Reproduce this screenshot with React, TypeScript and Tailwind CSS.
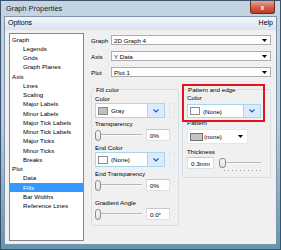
import React from 'react';

const tree: [string, number][] = [
  ['Graph', 0],
  ['Legends', 1],
  ['Grids', 1],
  ['Graph Planes', 1],
  ['Axis', 0],
  ['Lines', 1],
  ['Scaling', 1],
  ['Major Labels', 1],
  ['Minor Labels', 1],
  ['Major Tick Labels', 1],
  ['Minor Tick Labels', 1],
  ['Major Ticks', 1],
  ['Minor Ticks', 1],
  ['Breaks', 1],
  ['Plot', 0],
  ['Data', 1],
  ['Fills', 1],
  ['Bar Widths', 1],
  ['Reference Lines', 1],
];

function Arrow() {
  return (
    <svg width="5" height="3" viewBox="0 0 5 3" className="shrink-0">
      <path d="M0 0h5L2.5 3z" fill="#000" />
    </svg>
  );
}

function Chevron() {
  return (
    <svg width="6" height="4" viewBox="0 0 6 4">
      <path d="M0.5 0.5L3 3L5.5 0.5" stroke="#1d5fb5" strokeWidth="1.2" fill="none" />
    </svg>
  );
}

function TopCombo({ label, value }: { label: string; value: string }) {
  return (
    <div className="flex items-center h-[10px]">
      <span className="w-[20px] leading-[7px]">{label}</span>
      <div className="flex-1 h-full flex items-center bg-white border border-[#abadb3] pl-[2px] pr-[3px]">
        <span className="flex-1 leading-[7px]">{value}</span>
        <Arrow />
      </div>
    </div>
  );
}

function ColorCombo({ swatch, value, className }: { swatch: string; value: string; className: string }) {
  return (
    <div className={`flex items-center bg-white border border-[#a6d6f2] ${className}`}>
      <div className={`ml-[2px] w-[10px] h-[8px] border border-[#8a8a8a] ${swatch}`} />
      <span className="ml-[3px] flex-1 leading-[7px]">{value}</span>
      <div className="w-[17px] h-full flex items-center justify-center bg-[#d9ebfc] border-l border-[#a6d6f2]">
        <Chevron />
      </div>
    </div>
  );
}

function TextBox({ value, className }: { value: string; className: string }) {
  return (
    <div className={`h-[12px] bg-white border border-[#dcdfe3] border-t-[#c4c9cf] flex items-center pl-[3px] leading-[7px] ${className}`}>
      {value}
    </div>
  );
}

function Thumb() {
  return <div className="w-[6px] h-[11px] rounded-[3px] border border-[#8c8c8c] bg-gradient-to-b from-[#f7f7f7] to-[#e1e1e1] shrink-0" />;
}

function SliderRow({ value }: { value: string }) {
  return (
    <div className="flex items-center h-[12px] mt-[2px]">
      <div className="relative w-[47px] h-full flex items-center">
        <div className="absolute left-0 right-0 top-[5px] h-[2px] border-t border-[#b8b8b8] border-b border-b-[#f8f8f8]" />
        <div className="relative">
          <Thumb />
        </div>
      </div>
      <TextBox value={value} className="ml-[4px] w-[24px]" />
    </div>
  );
}

function Label({ children, className = '' }: { children: React.ReactNode; className?: string }) {
  return <div className={`h-[7px] leading-[7px] whitespace-nowrap ${className}`}>{children}</div>;
}

export default function App() {
  return (
    <div className="w-[281px] h-[250px] overflow-hidden bg-gradient-to-b from-[#c4d4e3] via-[#b7cddf] to-[#5d97b3] border border-[#3b5269] flex flex-col font-['Liberation_Sans',Arial,sans-serif] text-[6.2px] text-black">
      {/* title bar */}
      <div className="h-[15px] flex items-start shrink-0">
        <span className="ml-[5px] mt-[3px] text-[7.4px] leading-[9px] text-[#1c1c1c]">Graph Properties</span>
        <div className="ml-auto mr-[5px] w-[25px] h-[13px] rounded-b-[3px] border border-t-0 border-[#6d2a20] bg-gradient-to-b from-[#e9a698] via-[#d2604a] to-[#c0391f] flex items-center justify-center">
          <span className="text-white font-bold text-[7px] leading-[7px]">x</span>
        </div>
      </div>
      {/* client */}
      <div className="mx-[3px] h-[229px] border border-[#7d95ac] bg-[#f0f0f0] flex flex-col">
        <div className="h-[13px] flex items-center justify-between px-[3px] bg-gradient-to-b from-[#f4f6fb] to-[#dbe2ef] text-[7px]">
          <span>Options</span>
          <span>Help</span>
        </div>
        <div className="flex pt-[3px]">
          {/* tree */}
          <div className="ml-[4px] w-[75px] h-[208px] bg-white border border-[#828790] pt-[0.5px]">
            {tree.map(([name, lvl]) => {
              const sel = name === 'Fills';
              return (
                <div
                  key={name}
                  className={`h-[9.28px] leading-[9.28px] whitespace-nowrap ${lvl ? 'pl-[13px]' : 'pl-[2px]'} ${sel ? 'bg-[#3399ff] text-white' : ''}`}
                >
                  {name}
                </div>
              );
            })}
          </div>
          {/* right panel */}
          <div className="ml-[7px] w-[180px] flex flex-col">
            <div className="mt-[2px]">
              <TopCombo label="Graph" value="2D Graph 4" />
            </div>
            <div className="mt-[6px]">
              <TopCombo label="Axis" value="Y Data" />
            </div>
            <div className="mt-[6px]">
              <TopCombo label="Plot" value="Plot 1" />
            </div>
            <div className="flex gap-[3px] mt-[12px] items-start">
              {/* fill color group */}
              <div className="w-[88px] border border-[#d5dfe5] rounded-[3px] px-[3px] pb-[5px]">
                <Label className="-mt-[4px] w-fit px-[1px] bg-[#f0f0f0]">Fill color</Label>
                <Label className="mt-[2px]">Color</Label>
                <div className="flex items-center mt-[1px]">
                  <ColorCombo swatch="bg-[#c0c0c0]" value="Gray" className="w-[72px] h-[15px]" />
                  <div className="ml-[4px] w-[6px] h-[15px] border border-[#e4e8ec]" />
                </div>
                <Label className="mt-[2px]">Transparency</Label>
                <SliderRow value="0%" />
                <Label className="mt-[3px]">End Color</Label>
                <div className="flex items-center mt-[1px]">
                  <ColorCombo swatch="bg-white" value="(None)" className="w-[72px] h-[15px]" />
                  <div className="ml-[4px] w-[6px] h-[15px] border border-[#e4e8ec]" />
                </div>
                <Label className="mt-[3px]">End Transparency</Label>
                <SliderRow value="0%" />
                <Label className="mt-[8px]">Gradient Angle</Label>
                <SliderRow value="0.0°" />
              </div>
              {/* pattern and edge group */}
              <div className="relative w-[89px] border border-[#d5dfe5] rounded-[3px] px-[4px] pb-[9px]">
                <Label className="-mt-[4px] w-fit px-[1px] bg-[#f0f0f0]">Pattern and edge</Label>
                <Label className="mt-[1px]">Color</Label>
                <ColorCombo swatch="bg-white" value="(None)" className="mt-[3px] w-[74px] h-[14px]" />
                <Label className="mt-[1px]">Pattern</Label>
                <div className="mt-[3px] w-[61px] h-[15px] bg-white border border-[#e6e6e6] flex items-center pr-[4px]">
                  <div className="ml-[2px] w-[13px] h-[8px] border border-[#6f6f6f] bg-[#c4c4c4]" />
                  <span className="ml-[1px] flex-1 leading-[7px]">(none)</span>
                  <Arrow />
                </div>
                <Label className="mt-[4px]">Thickness</Label>
                <div className="mt-[3px] flex items-center h-[10px]">
                  <TextBox value="0.3mm" className="w-[27px] h-[10px]" />
                  <div className="relative ml-[5px] w-[42px] h-full flex items-center">
                    <div className="absolute left-0 right-0 top-[4px] h-[2px] border-t border-[#b8b8b8] border-b border-b-[#f8f8f8]" />
                    <div className="relative">
                      <div className="w-[7px] h-[10px] rounded-[3px] border border-[#8c8c8c] bg-gradient-to-b from-[#f7f7f7] to-[#e1e1e1]" />
                    </div>
                    <div className="absolute left-[5px] right-0 top-[12px] flex justify-between">
                      {Array.from({ length: 10 }).map((_, i) => (
                        <div key={i} className="w-px h-px bg-[#9a9a9a]" />
                      ))}
                    </div>
                  </div>
                </div>
                <div className="absolute left-[-1px] top-[-6px] w-[83px] h-[38px] border-2 border-[#e5141c]" />
              </div>
            </div>
          </div>
        </div>
      </div>
    </div>
  );
}
